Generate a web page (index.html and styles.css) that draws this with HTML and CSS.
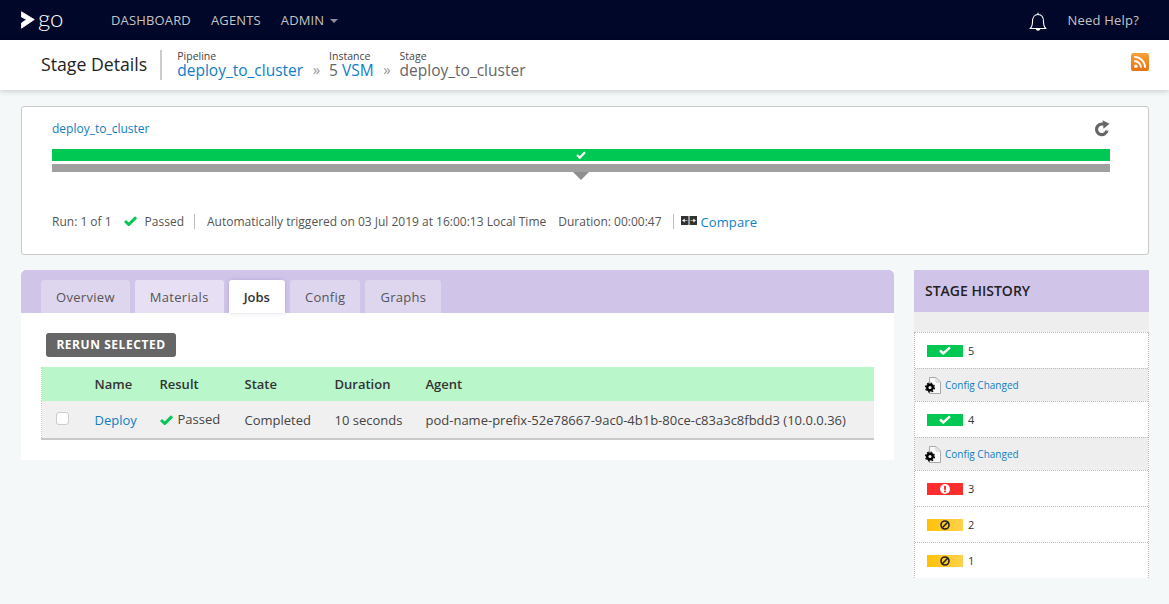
FILE: index.html
```html
<!DOCTYPE html>
<html>
<head>
  <title>Stage Details</title>
  <link rel="stylesheet" href="styles.css">
</head>
<body>
  <div class="site-header">
    <div class="logo">
      <svg width="14" height="18" viewBox="0 0 14 18"><path d="M0.500 0.800 L13.300 8.600 L0.500 17.200 V12 L5.500 8.600 L0.500 6 Z" fill="#fff" stroke="#fff" stroke-width="0.800" stroke-linejoin="round"/></svg>
      <span class="logo-text">go</span>
    </div>
    <a class="nav-link">DASHBOARD</a>
    <a class="nav-link">AGENTS</a>
    <a class="nav-link">ADMIN<span class="caret"></span></a>
    <div class="header-right">
      <svg class="bell" width="18" height="20" viewBox="0 0 18 20"><path d="M1 16.500 C3 15 3.500 13 3.500 9.500 C3.500 5.500 5.500 2.500 9 2.500 C12.500 2.500 14.500 5.500 14.500 9.500 C14.500 13 15 15 17 16.500 Z" fill="none" stroke="#fff" stroke-width="1.100" stroke-linejoin="round"/><path d="M9 0.800 V2.500" stroke="#fff" stroke-width="1.200"/><path d="M6.800 17 C7 19.300 11 19.300 11.200 17 Z" fill="#fff"/></svg>
      <a class="help-link">Need Help?</a>
    </div>
  </div>

  <div class="sub-header">
    <h1 class="page-title">Stage Details</h1>
    <div class="crumb">
      <span class="crumb-label">Pipeline</span>
      <a class="crumb-value crumb-link">deploy_to_cluster</a>
    </div>
    <span class="crumb-sep">»</span>
    <div class="crumb">
      <span class="crumb-label">Instance</span>
      <span class="crumb-value">5 <a class="crumb-link">VSM</a></span>
    </div>
    <span class="crumb-sep">»</span>
    <div class="crumb">
      <span class="crumb-label">Stage</span>
      <span class="crumb-value">deploy_to_cluster</span>
    </div>
    <svg class="rss" width="18" height="18" viewBox="0 0 18 18">
      <defs><linearGradient id="rssfill" x1="0" y1="0" x2="0" y2="1"><stop offset="0" stop-color="#f7a13a"/><stop offset="1" stop-color="#e9710f"/></linearGradient></defs>
      <rect width="18" height="18" rx="2.500" fill="url(#rssfill)"/>
      <circle cx="4.800" cy="13.200" r="1.700" fill="#fff"/>
      <path d="M3.200 8 A6.800 6.800 0 0 1 10 14.800" fill="none" stroke="#fff" stroke-width="1.800"/>
      <path d="M3.200 3.800 A11 11 0 0 1 14.200 14.800" fill="none" stroke="#fff" stroke-width="1.800"/>
    </svg>
  </div>

  <div class="content">
    <div class="stage-card">
      <div class="stage-card-top">
        <a class="link stage-link">deploy_to_cluster</a>
        <svg class="refresh" width="16" height="17" viewBox="0 0 16 17"><path d="M13 10.500 A5.300 5.300 0 1 1 9.500 4.300" fill="none" stroke="#666" stroke-width="3.200"/><path d="M8.500 0.300 L15.500 3.800 L9.500 8.800 Z" fill="#666"/></svg>
      </div>
      <div class="run-bar">
        <svg width="10" height="8" viewBox="0 0 10 8"><path d="M1 4 L3.800 6.700 L9 1.300" fill="none" stroke="#fff" stroke-width="2.200"/></svg>
      </div>
      <div class="gray-bar"></div>
      <div class="pointer"></div>
      <div class="run-info">
        <span>Run: 1 of 1</span>
        <svg class="info-check" width="13" height="10" viewBox="0 0 13 10"><path d="M1 5 L4.700 8.500 L12 1.300" fill="none" stroke="#00c853" stroke-width="3"/></svg>
        <span class="passed">Passed</span>
        <span class="divider"></span>
        <span class="triggered">Automatically triggered on 03 Jul 2019 at 16:00:13 Local Time</span>
        <span class="duration">Duration: 00:00:47</span>
        <span class="divider last"></span>
        <svg class="compare-icon" width="16" height="9" viewBox="0 0 16 9"><rect width="7.500" height="9" fill="#333"/><rect x="8.500" width="7.500" height="9" fill="#333"/><path d="M1.500 4.500 L3.500 3 V6 Z M6.500 4.500 H3.500 M14.500 4.500 L12.500 3 V6 Z M9.500 4.500 H12.500" fill="#fff" stroke="#fff" stroke-width="0.500"/></svg>
        <a class="link compare">Compare</a>
      </div>
    </div>

    <div class="columns">
      <div class="main-panel">
        <div class="tabs">
          <a class="tab">Overview</a>
          <a class="tab tab-light">Materials</a>
          <a class="tab tab-active">Jobs</a>
          <a class="tab">Config</a>
          <a class="tab">Graphs</a>
        </div>
        <div class="tab-body">
          <button class="rerun">RERUN SELECTED</button>
          <table class="jobs">
            <thead>
              <tr>
                <th class="col-check"></th>
                <th class="col-name">Name</th>
                <th class="col-result">Result</th>
                <th class="col-state">State</th>
                <th class="col-duration">Duration</th>
                <th>Agent</th>
              </tr>
            </thead>
            <tbody>
              <tr>
                <td class="check-cell"><span class="checkbox"></span></td>
                <td><a class="link">Deploy</a></td>
                <td class="result-cell"><svg class="result-check" width="13" height="10" viewBox="0 0 13 10"><path d="M1 5 L4.700 8.500 L12 1.300" fill="none" stroke="#00c853" stroke-width="3"/></svg><span class="result-text">Passed</span></td>
                <td>Completed</td>
                <td>10 seconds</td>
                <td>pod-name-prefix-52e78667-9ac0-4b1b-80ce-c83a3c8fbdd3 (10.0.0.36)</td>
              </tr>
            </tbody>
          </table>
        </div>
      </div>

      <div class="history">
        <div class="history-title">STAGE HISTORY</div>
        <div class="history-gap"></div>
        <div class="history-list">
          <div class="history-row">
            <span class="badge badge-pass"><svg width="12" height="9" viewBox="0 0 12 9"><path d="M1 4.500 L4.300 7.500 L11 1.300" fill="none" stroke="#fff" stroke-width="2.400"/></svg></span>
            <span>5</span>
          </div>
          <div class="config-row">
            <svg class="config-icon" width="16" height="17" viewBox="0 0 16 17"><path d="M4.500 0.500 H11 L15.500 5 V16.500 H4.500 Z" fill="#f8f8f8" stroke="#a8a8a8" stroke-width="1"/><path d="M11 0.500 V5 H15.500" fill="none" stroke="#ccc" stroke-width="1"/><circle cx="5" cy="10.500" r="2.800" fill="#eee" stroke="#000" stroke-width="2.400"/><circle cx="5" cy="10.500" r="4.500" fill="none" stroke="#000" stroke-width="1.200" stroke-dasharray="1.800 1.730"/></svg>
            <a class="link">Config Changed</a>
          </div>
          <div class="history-row">
            <span class="badge badge-pass"><svg width="12" height="9" viewBox="0 0 12 9"><path d="M1 4.500 L4.300 7.500 L11 1.300" fill="none" stroke="#fff" stroke-width="2.400"/></svg></span>
            <span>4</span>
          </div>
          <div class="config-row">
            <svg class="config-icon" width="16" height="17" viewBox="0 0 16 17"><path d="M4.500 0.500 H11 L15.500 5 V16.500 H4.500 Z" fill="#f8f8f8" stroke="#a8a8a8" stroke-width="1"/><path d="M11 0.500 V5 H15.500" fill="none" stroke="#ccc" stroke-width="1"/><circle cx="5" cy="10.500" r="2.800" fill="#eee" stroke="#000" stroke-width="2.400"/><circle cx="5" cy="10.500" r="4.500" fill="none" stroke="#000" stroke-width="1.200" stroke-dasharray="1.800 1.730"/></svg>
            <a class="link">Config Changed</a>
          </div>
          <div class="history-row">
            <span class="badge badge-fail"><svg width="10" height="10" viewBox="0 0 10 10"><circle cx="5" cy="5" r="5" fill="#fff"/><rect x="4" y="1.800" width="2" height="4" fill="#ff2d2d"/><rect x="4" y="6.600" width="2" height="1.700" fill="#ff2d2d"/></svg></span>
            <span>3</span>
          </div>
          <div class="history-row">
            <span class="badge badge-cancel"><svg width="10" height="10" viewBox="0 0 10 10"><circle cx="5" cy="5" r="4" fill="none" stroke="#222" stroke-width="1.600"/><path d="M2.300 7.700 L7.700 2.300" stroke="#222" stroke-width="1.600"/></svg></span>
            <span>2</span>
          </div>
          <div class="history-row">
            <span class="badge badge-cancel"><svg width="10" height="10" viewBox="0 0 10 10"><circle cx="5" cy="5" r="4" fill="none" stroke="#222" stroke-width="1.600"/><path d="M2.300 7.700 L7.700 2.300" stroke="#222" stroke-width="1.600"/></svg></span>
            <span>1</span>
          </div>
        </div>
      </div>
    </div>
  </div>
</body>
</html>
```

FILE: styles.css
```css
* {
  box-sizing: border-box;
}

body {
  margin: 0;
  background: #f4f8f9;
  font-family: "Open Sans", sans-serif;
  font-size: 13px;
  color: #333;
  height: 604px;
  overflow: hidden;
}

.link {
  color: #0f7ec6;
  text-decoration: none;
}

/* top nav */
.site-header {
  height: 40px;
  background: #000728;
  display: flex;
  align-items: center;
  padding-left: 21px;
}

.logo {
  display: flex;
  align-items: center;
  width: 90px;
}

.logo-text {
  color: #fff;
  font-family: Lato, sans-serif;
  font-size: 24px;
  line-height: 24px;
  margin: -4px 0 0 3px;
  font-weight: 300;
}

.nav-link {
  color: #c4c4c4;
  font-size: 13px;
  letter-spacing: 0.15px;
  margin-right: 20px;
}

.caret {
  display: inline-block;
  margin-left: 6px;
  vertical-align: 2px;
  border-top: 4px solid #8e8e9c;
  border-left: 4px solid transparent;
  border-right: 4px solid transparent;
}

.header-right {
  margin-left: auto;
  display: flex;
  align-items: center;
  padding-right: 30px;
}

.bell {
  margin-right: 21px;
  margin-top: 4px;
}

.help-link {
  color: #c4c4c4;
  font-size: 13px;
  letter-spacing: 0.2px;
}

/* sub header */
.sub-header {
  height: 50px;
  background: #fff;
  box-shadow: 0 1px 6px rgba(0,0,0,0.2);
  display: flex;
  align-items: center;
  padding-left: 41px;
  padding-right: 20px;
}

.page-title {
  margin: 0 12px 0 0;
  padding: 0 13px 2px 0;
  font-size: 17.7px;
  font-weight: 400;
  color: #222;
  line-height: 28px;
  border-right: 2px solid #ccc;
}

.crumb {
  display: flex;
  flex-direction: column;
  margin-top: -2px;
  margin-left: 3px;
}

.crumb-label {
  font-size: 10.5px;
  line-height: 12px;
  color: #444;
}

.crumb-value {
  font-size: 15.5px;
  line-height: 16px;
  color: #666;
}

.crumb-link {
  color: #0f7ec6;
}

.crumb-sep {
  font-size: 15px;
  color: #999;
  margin: 8px 6px 0 9.5px;
}

.rss {
  margin-left: auto;
  margin-top: -6px;
}

/* stage card */
.content {
  padding: 16px 20px 0 21px;
}

.stage-card {
  height: 149px;
  background: #fff;
  border: 1px solid #c9c9c9;
  border-radius: 3px;
  padding: 0 38px 0 30px;
}

.stage-card-top {
  height: 42px;
  display: flex;
  align-items: center;
  justify-content: space-between;
}

.stage-link {
  font-size: 12px;
}

.run-bar {
  height: 12px;
  background: #00c853;
  display: flex;
  align-items: center;
  justify-content: center;
}

.gray-bar {
  height: 8px;
  margin-top: 3px;
  background: #a0a0a0;
}

.pointer {
  width: 0;
  margin: 0 auto;
  border-top: 8px solid #8f8f8f;
  border-left: 8px solid transparent;
  border-right: 8px solid transparent;
}

.run-info {
  margin-top: 33px;
  display: flex;
  align-items: center;
  font-size: 12px;
  color: #555;
  height: 16px;
}

.info-check {
  margin-left: 12px;
}

.passed {
  margin-left: 8px;
}

.divider {
  width: 1px;
  height: 15px;
  background: #bbb;
  margin: 0 12px 0 10px;
}

.duration {
  margin-left: 12px;
}

.divider.last {
  margin: 0 7px 0 11px;
}

.compare-icon {
  margin-top: -2px;
}

.compare {
  font-size: 13px;
  letter-spacing: 0.1px;
  margin-left: 4px;
  margin-top: 1px;
}

/* bottom columns */
.columns {
  display: flex;
  align-items: flex-start;
  margin-top: 15px;
  gap: 20px;
}

.main-panel {
  width: 873px;
  height: 190px;
  background: #fff;
}

.tabs {
  height: 43px;
  background: #d1c4e9;
  border-radius: 5px 5px 0 0;
  display: flex;
  align-items: flex-end;
  padding-left: 20px;
  gap: 5px;
}

.tab {
  height: 33px;
  padding: 0 15px;
  background: #ded5ef;
  border-radius: 3px 3px 0 0;
  color: #555;
  display: flex;
  align-items: center;
  font-size: 13px;
  letter-spacing: 0.3px;
}

.tab-light {
  background: #e7e0f4;
}

.tab-active {
  background: #fff;
  color: #333;
  font-weight: 600;
  letter-spacing: 0;
  box-shadow: 0 0 4px rgba(80,50,140,0.2);
}

.tab-body {
  padding: 20px 20px 0 20px;
}

.rerun {
  display: block;
  margin-left: 5px;
  width: 130px;
  height: 24px;
  padding: 0 0 2px;
  border: 0;
  border-radius: 3px;
  background: #666;
  color: #fff;
  font-family: "Open Sans", sans-serif;
  font-size: 12px;
  font-weight: 700;
  letter-spacing: 0.55px;
}

.jobs {
  margin-top: 10px;
  width: 833px;
  border-collapse: collapse;
  font-size: 13px;
  table-layout: fixed;
}

.jobs th {
  background: #b9f6ca;
  height: 34px;
  text-align: left;
  font-weight: 600;
  color: #333;
  padding: 0;
}

.jobs td {
  background: #f0f0f0;
  height: 38px;
  padding: 0;
  border-bottom: 2px solid #c8c8c8;
  white-space: nowrap;
  color: #444;
}

.jobs .check-cell {
  border-left: 1px dotted #ccc;
}

.jobs .col-check {
  width: 53px;
  border-left: 1px dotted #ccc;
}

.col-name {
  width: 65px;
}

.col-result {
  width: 85px;
}

.col-state {
  width: 90px;
}

.col-duration {
  width: 91px;
}

.checkbox {
  display: block;
  width: 13px;
  height: 13px;
  margin: -2px 0 0 14px;
  background: #fff;
  border: 1px solid #ccc;
  border-radius: 3px;
}

.result-text {
  margin-left: 5px;
  position: relative;
  top: -1px;
}

/* history */
.history {
  width: 235px;
}

.history-title {
  height: 42px;
  background: #d1c4e9;
  color: #222;
  font-size: 14px;
  font-weight: 600;
  padding: 0 0 2px 11px;
  display: flex;
  align-items: center;
}

.history-gap {
  height: 20px;
  background: #eee;
}

.history-list {
  background: #fff;
  border-left: 1px dotted #bbb;
  border-right: 1px dotted #bbb;
  font-size: 11px;
}

.history-row {
  height: 36px;
  display: flex;
  align-items: center;
  gap: 5px;
  padding-left: 12px;
  border-top: 1px dotted #bbb;
  color: #333;
}

.config-row {
  height: 33px;
  display: flex;
  align-items: center;
  padding-left: 10px;
  background: #eee;
  border-top: 1px dotted #bbb;
  font-size: 10px;
}

.config-icon {
  margin-right: 4px;
}

.badge {
  width: 36px;
  height: 12px;
  display: flex;
  align-items: center;
  justify-content: center;
}

.badge-pass {
  background: #00c853;
}

.badge-fail {
  background: #ff2d2d;
}

.badge-cancel {
  background: linear-gradient(to right, #ffc107, #ffd24d);
}
```
